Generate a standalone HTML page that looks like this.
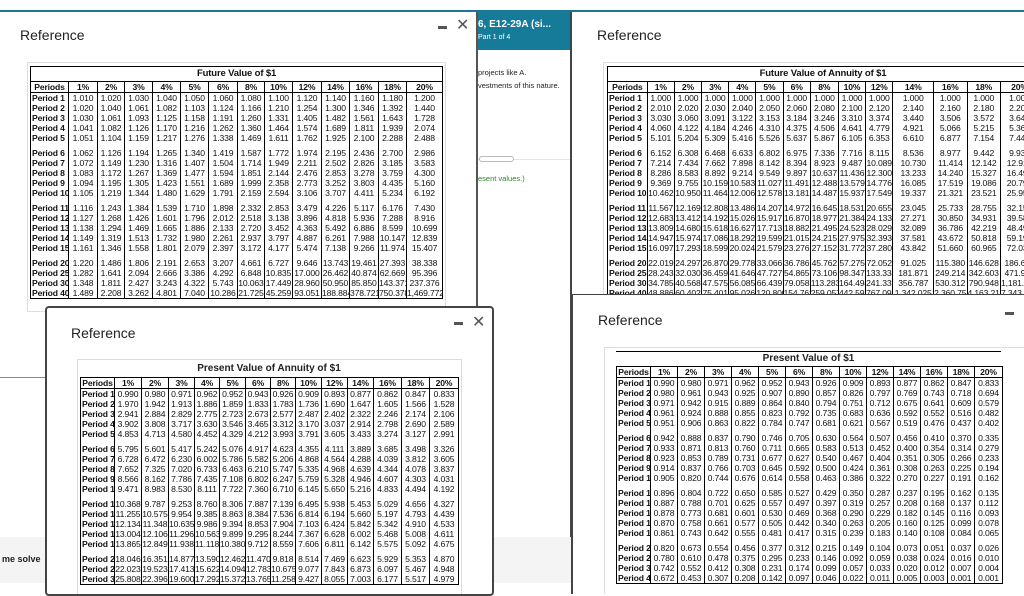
<!DOCTYPE html>
<html><head><meta charset="utf-8"><style>
*{margin:0;padding:0;box-sizing:border-box}
body{width:1024px;height:583px;overflow:hidden;position:relative;background:#fff;font-family:"Liberation Sans",sans-serif;color:#222}
.abs{position:absolute}
.win{position:absolute;background:#fff;overflow:hidden}
.ttl{position:absolute;font-size:14px;color:#222}
.frame{position:absolute;border:1px solid #ddd;background:#fff}
table.t{position:absolute;border-collapse:collapse;table-layout:fixed;font-family:"Liberation Sans Narrow","Liberation Sans",sans-serif;font-size:8.6px;letter-spacing:-0.15px;color:#111;border:1px solid #000}
table.t td,table.t th{height:10px;line-height:10px;padding:0;text-align:center;border-left:1px solid #000;white-space:nowrap;overflow:hidden;font-weight:normal}
table.t th{font-weight:bold;text-align:left;padding-left:1px}
table.t tr.h td,table.t tr.h th{font-weight:bold;text-align:center;border-bottom:1px solid #000;height:11px}
table.t tr.g td,table.t tr.g th{padding-top:5px;height:15px}
table.t tr.ti td{font-weight:bold;border-bottom:1px solid #000;height:15px;font-size:9.5px}
.ptitle{position:absolute;font-family:"Liberation Sans Narrow","Liberation Sans",sans-serif;font-weight:bold;font-size:10px;text-align:center}
.min{position:absolute;width:9px;height:3px;background:#555}
.x{position:absolute;font-size:16px;color:#555;line-height:16px}
</style></head><body>

<div class="abs" style="left:0;top:10px;width:1024px;height:2px;background:#1a7896"></div>

<!-- Window 1 -->
<div class="win" style="left:0;top:12px;width:478px;height:366px;border-right:2px solid #555;border-bottom:1px solid #888;z-index:1">
<div class="ttl" style="left:20px;top:15px">Reference</div>
<div class="min" style="left:438px;top:14px"></div>
<div class="x" style="left:456px;top:6px">✕</div>
<div class="frame" style="left:27px;top:50px;width:419px;height:250px"></div>
<table class="t" style="left:30px;top:54px;width:412px">
<colgroup><col style="width:38px"><col style="width:29px"><col style="width:27px"><col style="width:28px"><col style="width:28px"><col style="width:28px"><col style="width:29px"><col style="width:27px"><col style="width:28px"><col style="width:29px"><col style="width:28px"><col style="width:29px"><col style="width:28px"><col style="width:36px"></colgroup>
<tr class="ti"><td colspan="14">Future Value of $1</td></tr>
<tr class="h"><td>Periods</td><td>1%</td><td>2%</td><td>3%</td><td>4%</td><td>5%</td><td>6%</td><td>8%</td><td>10%</td><td>12%</td><td>14%</td><td>16%</td><td>18%</td><td>20%</td></tr>
<tr><th>Period 1</th><td>1.010</td><td>1.020</td><td>1.030</td><td>1.040</td><td>1.050</td><td>1.060</td><td>1.080</td><td>1.100</td><td>1.120</td><td>1.140</td><td>1.160</td><td>1.180</td><td>1.200</td></tr>
<tr><th>Period 2</th><td>1.020</td><td>1.040</td><td>1.061</td><td>1.082</td><td>1.103</td><td>1.124</td><td>1.166</td><td>1.210</td><td>1.254</td><td>1.300</td><td>1.346</td><td>1.392</td><td>1.440</td></tr>
<tr><th>Period 3</th><td>1.030</td><td>1.061</td><td>1.093</td><td>1.125</td><td>1.158</td><td>1.191</td><td>1.260</td><td>1.331</td><td>1.405</td><td>1.482</td><td>1.561</td><td>1.643</td><td>1.728</td></tr>
<tr><th>Period 4</th><td>1.041</td><td>1.082</td><td>1.126</td><td>1.170</td><td>1.216</td><td>1.262</td><td>1.360</td><td>1.464</td><td>1.574</td><td>1.689</td><td>1.811</td><td>1.939</td><td>2.074</td></tr>
<tr><th>Period 5</th><td>1.051</td><td>1.104</td><td>1.159</td><td>1.217</td><td>1.276</td><td>1.338</td><td>1.469</td><td>1.611</td><td>1.762</td><td>1.925</td><td>2.100</td><td>2.288</td><td>2.488</td></tr>
<tr class="g"><th>Period 6</th><td>1.062</td><td>1.126</td><td>1.194</td><td>1.265</td><td>1.340</td><td>1.419</td><td>1.587</td><td>1.772</td><td>1.974</td><td>2.195</td><td>2.436</td><td>2.700</td><td>2.986</td></tr>
<tr><th>Period 7</th><td>1.072</td><td>1.149</td><td>1.230</td><td>1.316</td><td>1.407</td><td>1.504</td><td>1.714</td><td>1.949</td><td>2.211</td><td>2.502</td><td>2.826</td><td>3.185</td><td>3.583</td></tr>
<tr><th>Period 8</th><td>1.083</td><td>1.172</td><td>1.267</td><td>1.369</td><td>1.477</td><td>1.594</td><td>1.851</td><td>2.144</td><td>2.476</td><td>2.853</td><td>3.278</td><td>3.759</td><td>4.300</td></tr>
<tr><th>Period 9</th><td>1.094</td><td>1.195</td><td>1.305</td><td>1.423</td><td>1.551</td><td>1.689</td><td>1.999</td><td>2.358</td><td>2.773</td><td>3.252</td><td>3.803</td><td>4.435</td><td>5.160</td></tr>
<tr><th>Period 10</th><td>1.105</td><td>1.219</td><td>1.344</td><td>1.480</td><td>1.629</td><td>1.791</td><td>2.159</td><td>2.594</td><td>3.106</td><td>3.707</td><td>4.411</td><td>5.234</td><td>6.192</td></tr>
<tr class="g"><th>Period 11</th><td>1.116</td><td>1.243</td><td>1.384</td><td>1.539</td><td>1.710</td><td>1.898</td><td>2.332</td><td>2.853</td><td>3.479</td><td>4.226</td><td>5.117</td><td>6.176</td><td>7.430</td></tr>
<tr><th>Period 12</th><td>1.127</td><td>1.268</td><td>1.426</td><td>1.601</td><td>1.796</td><td>2.012</td><td>2.518</td><td>3.138</td><td>3.896</td><td>4.818</td><td>5.936</td><td>7.288</td><td>8.916</td></tr>
<tr><th>Period 13</th><td>1.138</td><td>1.294</td><td>1.469</td><td>1.665</td><td>1.886</td><td>2.133</td><td>2.720</td><td>3.452</td><td>4.363</td><td>5.492</td><td>6.886</td><td>8.599</td><td>10.699</td></tr>
<tr><th>Period 14</th><td>1.149</td><td>1.319</td><td>1.513</td><td>1.732</td><td>1.980</td><td>2.261</td><td>2.937</td><td>3.797</td><td>4.887</td><td>6.261</td><td>7.988</td><td>10.147</td><td>12.839</td></tr>
<tr><th>Period 15</th><td>1.161</td><td>1.346</td><td>1.558</td><td>1.801</td><td>2.079</td><td>2.397</td><td>3.172</td><td>4.177</td><td>5.474</td><td>7.138</td><td>9.266</td><td>11.974</td><td>15.407</td></tr>
<tr class="g"><th>Period 20</th><td>1.220</td><td>1.486</td><td>1.806</td><td>2.191</td><td>2.653</td><td>3.207</td><td>4.661</td><td>6.727</td><td>9.646</td><td>13.743</td><td>19.461</td><td>27.393</td><td>38.338</td></tr>
<tr><th>Period 25</th><td>1.282</td><td>1.641</td><td>2.094</td><td>2.666</td><td>3.386</td><td>4.292</td><td>6.848</td><td>10.835</td><td>17.000</td><td>26.462</td><td>40.874</td><td>62.669</td><td>95.396</td></tr>
<tr><th>Period 30</th><td>1.348</td><td>1.811</td><td>2.427</td><td>3.243</td><td>4.322</td><td>5.743</td><td>10.063</td><td>17.449</td><td>28.960</td><td>50.950</td><td>85.850</td><td>143.371</td><td>237.376</td></tr>
<tr><th>Period 40</th><td>1.489</td><td>2.208</td><td>3.262</td><td>4.801</td><td>7.040</td><td>10.286</td><td>21.725</td><td>45.259</td><td>93.051</td><td>188.884</td><td>378.721</td><td>750.378</td><td>1,469.772</td></tr>
</table>
</div>

<!-- middle panel -->
<div class="win" style="left:478px;top:12px;width:94px;height:571px;border-right:2px solid #444;z-index:2">
<div class="abs" style="left:0;top:0;width:94px;height:38px;background:#167a99;color:#fff">
<div class="abs" style="left:0;top:7px;font-size:10px;font-weight:bold;white-space:nowrap">6, E12-29A (si...</div>
<div class="abs" style="left:0;top:22px;font-size:7px;white-space:nowrap">Part 1 of 4</div>
</div>
<div class="abs" style="left:0;top:56px;font-size:7.5px;white-space:nowrap">projects like A.</div>
<div class="abs" style="left:0;top:69px;font-size:7.5px;white-space:nowrap">vestments of this nature.</div>
<div class="abs" style="left:0;top:147px;width:94px;height:1px;background:#e4e4e4"></div>
<div class="abs" style="left:1px;top:144px;width:35px;height:6px;border:1px solid #bbb;border-radius:3px;background:#fff"></div>
<div class="abs" style="left:0;top:162px;font-size:7.5px;color:#2a8a2a;white-space:nowrap">esent values.)</div>
</div>

<!-- Window 3 -->
<div class="win" style="left:572px;top:12px;width:452px;height:282px;z-index:2">
<div class="ttl" style="left:25px;top:15px">Reference</div>
<div class="frame" style="left:31px;top:50px;width:430px;height:240px"></div>
<table class="t" style="left:35px;top:54px;width:432px">
<colgroup><col style="width:38px"><col style="width:26px"><col style="width:26px"><col style="width:26px"><col style="width:26px"><col style="width:26px"><col style="width:26px"><col style="width:27px"><col style="width:26px"><col style="width:26px"><col style="width:39px"><col style="width:32px"><col style="width:32px"><col style="width:36px"></colgroup>
<tr class="ti"><td colspan="14">Future Value of Annuity of $1</td></tr>
<tr class="h"><td>Periods</td><td>1%</td><td>2%</td><td>3%</td><td>4%</td><td>5%</td><td>6%</td><td>8%</td><td>10%</td><td>12%</td><td>14%</td><td>16%</td><td>18%</td><td>20%</td></tr>
<tr><th>Period 1</th><td>1.000</td><td>1.000</td><td>1.000</td><td>1.000</td><td>1.000</td><td>1.000</td><td>1.000</td><td>1.000</td><td>1.000</td><td>1.000</td><td>1.000</td><td>1.000</td><td>1.000</td></tr>
<tr><th>Period 2</th><td>2.010</td><td>2.020</td><td>2.030</td><td>2.040</td><td>2.050</td><td>2.060</td><td>2.080</td><td>2.100</td><td>2.120</td><td>2.140</td><td>2.160</td><td>2.180</td><td>2.200</td></tr>
<tr><th>Period 3</th><td>3.030</td><td>3.060</td><td>3.091</td><td>3.122</td><td>3.153</td><td>3.184</td><td>3.246</td><td>3.310</td><td>3.374</td><td>3.440</td><td>3.506</td><td>3.572</td><td>3.640</td></tr>
<tr><th>Period 4</th><td>4.060</td><td>4.122</td><td>4.184</td><td>4.246</td><td>4.310</td><td>4.375</td><td>4.506</td><td>4.641</td><td>4.779</td><td>4.921</td><td>5.066</td><td>5.215</td><td>5.368</td></tr>
<tr><th>Period 5</th><td>5.101</td><td>5.204</td><td>5.309</td><td>5.416</td><td>5.526</td><td>5.637</td><td>5.867</td><td>6.105</td><td>6.353</td><td>6.610</td><td>6.877</td><td>7.154</td><td>7.442</td></tr>
<tr class="g"><th>Period 6</th><td>6.152</td><td>6.308</td><td>6.468</td><td>6.633</td><td>6.802</td><td>6.975</td><td>7.336</td><td>7.716</td><td>8.115</td><td>8.536</td><td>8.977</td><td>9.442</td><td>9.930</td></tr>
<tr><th>Period 7</th><td>7.214</td><td>7.434</td><td>7.662</td><td>7.898</td><td>8.142</td><td>8.394</td><td>8.923</td><td>9.487</td><td>10.089</td><td>10.730</td><td>11.414</td><td>12.142</td><td>12.916</td></tr>
<tr><th>Period 8</th><td>8.286</td><td>8.583</td><td>8.892</td><td>9.214</td><td>9.549</td><td>9.897</td><td>10.637</td><td>11.436</td><td>12.300</td><td>13.233</td><td>14.240</td><td>15.327</td><td>16.499</td></tr>
<tr><th>Period 9</th><td>9.369</td><td>9.755</td><td>10.159</td><td>10.583</td><td>11.027</td><td>11.491</td><td>12.488</td><td>13.579</td><td>14.776</td><td>16.085</td><td>17.519</td><td>19.086</td><td>20.799</td></tr>
<tr><th>Period 10</th><td>10.462</td><td>10.950</td><td>11.464</td><td>12.006</td><td>12.578</td><td>13.181</td><td>14.487</td><td>15.937</td><td>17.549</td><td>19.337</td><td>21.321</td><td>23.521</td><td>25.959</td></tr>
<tr class="g"><th>Period 11</th><td>11.567</td><td>12.169</td><td>12.808</td><td>13.486</td><td>14.207</td><td>14.972</td><td>16.645</td><td>18.531</td><td>20.655</td><td>23.045</td><td>25.733</td><td>28.755</td><td>32.150</td></tr>
<tr><th>Period 12</th><td>12.683</td><td>13.412</td><td>14.192</td><td>15.026</td><td>15.917</td><td>16.870</td><td>18.977</td><td>21.384</td><td>24.133</td><td>27.271</td><td>30.850</td><td>34.931</td><td>39.581</td></tr>
<tr><th>Period 13</th><td>13.809</td><td>14.680</td><td>15.618</td><td>16.627</td><td>17.713</td><td>18.882</td><td>21.495</td><td>24.523</td><td>28.029</td><td>32.089</td><td>36.786</td><td>42.219</td><td>48.497</td></tr>
<tr><th>Period 14</th><td>14.947</td><td>15.974</td><td>17.086</td><td>18.292</td><td>19.599</td><td>21.015</td><td>24.215</td><td>27.975</td><td>32.393</td><td>37.581</td><td>43.672</td><td>50.818</td><td>59.196</td></tr>
<tr><th>Period 15</th><td>16.097</td><td>17.293</td><td>18.599</td><td>20.024</td><td>21.579</td><td>23.276</td><td>27.152</td><td>31.772</td><td>37.280</td><td>43.842</td><td>51.660</td><td>60.965</td><td>72.035</td></tr>
<tr class="g"><th>Period 20</th><td>22.019</td><td>24.297</td><td>26.870</td><td>29.778</td><td>33.066</td><td>36.786</td><td>45.762</td><td>57.275</td><td>72.052</td><td>91.025</td><td>115.380</td><td>146.628</td><td>186.688</td></tr>
<tr><th>Period 25</th><td>28.243</td><td>32.030</td><td>36.459</td><td>41.646</td><td>47.727</td><td>54.865</td><td>73.106</td><td>98.347</td><td>133.334</td><td>181.871</td><td>249.214</td><td>342.603</td><td>471.981</td></tr>
<tr><th>Period 30</th><td>34.785</td><td>40.568</td><td>47.575</td><td>56.085</td><td>66.439</td><td>79.058</td><td>113.283</td><td>164.494</td><td>241.333</td><td>356.787</td><td>530.312</td><td>790.948</td><td>1,181.882</td></tr>
<tr><th>Period 40</th><td>48.886</td><td>60.402</td><td>75.401</td><td>95.026</td><td>120.800</td><td>154.762</td><td>259.057</td><td>442.593</td><td>767.091</td><td>1,342.025</td><td>2,360.757</td><td>4,163.213</td><td>7,343.858</td></tr>
</table>
</div>

<!-- Window 4 -->
<div class="win" style="left:45px;top:306px;width:449px;height:290px;border:2px solid #444;border-radius:4px;z-index:3">
<div class="ttl" style="left:24px;top:17px">Reference</div>
<div class="min" style="left:407px;top:14px"></div>
<div class="x" style="left:425px;top:7px">✕</div>
<div class="frame" style="left:30px;top:51px;width:385px;height:240px"></div>
<div class="ptitle" style="left:33px;top:55px;width:378px">Present Value of Annuity of $1</div>
<table class="t" style="left:33px;top:69px;width:378px">
<colgroup><col style="width:34px"><col style="width:27px"><col style="width:27px"><col style="width:26px"><col style="width:25px"><col style="width:26px"><col style="width:25px"><col style="width:25px"><col style="width:26px"><col style="width:26px"><col style="width:26px"><col style="width:28px"><col style="width:28px"><col style="width:29px"></colgroup>
<tr class="h"><td>Periods</td><td>1%</td><td>2%</td><td>3%</td><td>4%</td><td>5%</td><td>6%</td><td>8%</td><td>10%</td><td>12%</td><td>14%</td><td>16%</td><td>18%</td><td>20%</td></tr>
<tr><th>Period 1</th><td>0.990</td><td>0.980</td><td>0.971</td><td>0.962</td><td>0.952</td><td>0.943</td><td>0.926</td><td>0.909</td><td>0.893</td><td>0.877</td><td>0.862</td><td>0.847</td><td>0.833</td></tr>
<tr><th>Period 2</th><td>1.970</td><td>1.942</td><td>1.913</td><td>1.886</td><td>1.859</td><td>1.833</td><td>1.783</td><td>1.736</td><td>1.690</td><td>1.647</td><td>1.605</td><td>1.566</td><td>1.528</td></tr>
<tr><th>Period 3</th><td>2.941</td><td>2.884</td><td>2.829</td><td>2.775</td><td>2.723</td><td>2.673</td><td>2.577</td><td>2.487</td><td>2.402</td><td>2.322</td><td>2.246</td><td>2.174</td><td>2.106</td></tr>
<tr><th>Period 4</th><td>3.902</td><td>3.808</td><td>3.717</td><td>3.630</td><td>3.546</td><td>3.465</td><td>3.312</td><td>3.170</td><td>3.037</td><td>2.914</td><td>2.798</td><td>2.690</td><td>2.589</td></tr>
<tr><th>Period 5</th><td>4.853</td><td>4.713</td><td>4.580</td><td>4.452</td><td>4.329</td><td>4.212</td><td>3.993</td><td>3.791</td><td>3.605</td><td>3.433</td><td>3.274</td><td>3.127</td><td>2.991</td></tr>
<tr class="g"><th>Period 6</th><td>5.795</td><td>5.601</td><td>5.417</td><td>5.242</td><td>5.076</td><td>4.917</td><td>4.623</td><td>4.355</td><td>4.111</td><td>3.889</td><td>3.685</td><td>3.498</td><td>3.326</td></tr>
<tr><th>Period 7</th><td>6.728</td><td>6.472</td><td>6.230</td><td>6.002</td><td>5.786</td><td>5.582</td><td>5.206</td><td>4.868</td><td>4.564</td><td>4.288</td><td>4.039</td><td>3.812</td><td>3.605</td></tr>
<tr><th>Period 8</th><td>7.652</td><td>7.325</td><td>7.020</td><td>6.733</td><td>6.463</td><td>6.210</td><td>5.747</td><td>5.335</td><td>4.968</td><td>4.639</td><td>4.344</td><td>4.078</td><td>3.837</td></tr>
<tr><th>Period 9</th><td>8.566</td><td>8.162</td><td>7.786</td><td>7.435</td><td>7.108</td><td>6.802</td><td>6.247</td><td>5.759</td><td>5.328</td><td>4.946</td><td>4.607</td><td>4.303</td><td>4.031</td></tr>
<tr><th>Period 10</th><td>9.471</td><td>8.983</td><td>8.530</td><td>8.111</td><td>7.722</td><td>7.360</td><td>6.710</td><td>6.145</td><td>5.650</td><td>5.216</td><td>4.833</td><td>4.494</td><td>4.192</td></tr>
<tr class="g"><th>Period 11</th><td>10.368</td><td>9.787</td><td>9.253</td><td>8.760</td><td>8.306</td><td>7.887</td><td>7.139</td><td>6.495</td><td>5.938</td><td>5.453</td><td>5.029</td><td>4.656</td><td>4.327</td></tr>
<tr><th>Period 12</th><td>11.255</td><td>10.575</td><td>9.954</td><td>9.385</td><td>8.863</td><td>8.384</td><td>7.536</td><td>6.814</td><td>6.194</td><td>5.660</td><td>5.197</td><td>4.793</td><td>4.439</td></tr>
<tr><th>Period 13</th><td>12.134</td><td>11.348</td><td>10.635</td><td>9.986</td><td>9.394</td><td>8.853</td><td>7.904</td><td>7.103</td><td>6.424</td><td>5.842</td><td>5.342</td><td>4.910</td><td>4.533</td></tr>
<tr><th>Period 14</th><td>13.004</td><td>12.106</td><td>11.296</td><td>10.563</td><td>9.899</td><td>9.295</td><td>8.244</td><td>7.367</td><td>6.628</td><td>6.002</td><td>5.468</td><td>5.008</td><td>4.611</td></tr>
<tr><th>Period 15</th><td>13.865</td><td>12.849</td><td>11.938</td><td>11.118</td><td>10.380</td><td>9.712</td><td>8.559</td><td>7.606</td><td>6.811</td><td>6.142</td><td>5.575</td><td>5.092</td><td>4.675</td></tr>
<tr class="g"><th>Period 20</th><td>18.046</td><td>16.351</td><td>14.877</td><td>13.590</td><td>12.462</td><td>11.470</td><td>9.818</td><td>8.514</td><td>7.469</td><td>6.623</td><td>5.929</td><td>5.353</td><td>4.870</td></tr>
<tr><th>Period 25</th><td>22.023</td><td>19.523</td><td>17.413</td><td>15.622</td><td>14.094</td><td>12.783</td><td>10.675</td><td>9.077</td><td>7.843</td><td>6.873</td><td>6.097</td><td>5.467</td><td>4.948</td></tr>
<tr><th>Period 30</th><td>25.808</td><td>22.396</td><td>19.600</td><td>17.292</td><td>15.372</td><td>13.765</td><td>11.258</td><td>9.427</td><td>8.055</td><td>7.003</td><td>6.177</td><td>5.517</td><td>4.979</td></tr>
</table>
</div>

<!-- bottom-left grey -->
<div class="abs" style="left:0;top:537px;width:45px;height:46px;background:#f4f4f4"></div>
<div class="abs" style="left:2px;top:554px;font-size:9px;font-weight:bold;z-index:4;white-space:nowrap">me solve</div>
<div class="abs" style="left:494px;top:537px;width:78px;height:46px;background:#f4f4f4;z-index:2"></div>

<!-- Window 5 -->
<div class="win" style="left:571px;top:294px;width:460px;height:300px;border-left:2px solid #444;border-top:1px solid #444;z-index:3">
<div class="ttl" style="left:25px;top:17px">Reference</div>
<div class="min" style="left:432px;top:17px"></div>
<div class="frame" style="left:31px;top:52px;width:430px;height:250px"></div>
<div class="abs" style="left:43px;top:56px;width:385px;height:1px;background:#000"></div>
<div class="ptitle" style="left:43px;top:58px;width:385px">Present Value of $1</div>
<table class="t" style="left:43px;top:71px;width:386px">
<colgroup><col style="width:34px"><col style="width:27px"><col style="width:27px"><col style="width:27px"><col style="width:27px"><col style="width:27px"><col style="width:27px"><col style="width:27px"><col style="width:27px"><col style="width:27px"><col style="width:27px"><col style="width:27px"><col style="width:27px"><col style="width:28px"></colgroup>
<tr class="h"><td>Periods</td><td>1%</td><td>2%</td><td>3%</td><td>4%</td><td>5%</td><td>6%</td><td>8%</td><td>10%</td><td>12%</td><td>14%</td><td>16%</td><td>18%</td><td>20%</td></tr>
<tr><th>Period 1</th><td>0.990</td><td>0.980</td><td>0.971</td><td>0.962</td><td>0.952</td><td>0.943</td><td>0.926</td><td>0.909</td><td>0.893</td><td>0.877</td><td>0.862</td><td>0.847</td><td>0.833</td></tr>
<tr><th>Period 2</th><td>0.980</td><td>0.961</td><td>0.943</td><td>0.925</td><td>0.907</td><td>0.890</td><td>0.857</td><td>0.826</td><td>0.797</td><td>0.769</td><td>0.743</td><td>0.718</td><td>0.694</td></tr>
<tr><th>Period 3</th><td>0.971</td><td>0.942</td><td>0.915</td><td>0.889</td><td>0.864</td><td>0.840</td><td>0.794</td><td>0.751</td><td>0.712</td><td>0.675</td><td>0.641</td><td>0.609</td><td>0.579</td></tr>
<tr><th>Period 4</th><td>0.961</td><td>0.924</td><td>0.888</td><td>0.855</td><td>0.823</td><td>0.792</td><td>0.735</td><td>0.683</td><td>0.636</td><td>0.592</td><td>0.552</td><td>0.516</td><td>0.482</td></tr>
<tr><th>Period 5</th><td>0.951</td><td>0.906</td><td>0.863</td><td>0.822</td><td>0.784</td><td>0.747</td><td>0.681</td><td>0.621</td><td>0.567</td><td>0.519</td><td>0.476</td><td>0.437</td><td>0.402</td></tr>
<tr class="g"><th>Period 6</th><td>0.942</td><td>0.888</td><td>0.837</td><td>0.790</td><td>0.746</td><td>0.705</td><td>0.630</td><td>0.564</td><td>0.507</td><td>0.456</td><td>0.410</td><td>0.370</td><td>0.335</td></tr>
<tr><th>Period 7</th><td>0.933</td><td>0.871</td><td>0.813</td><td>0.760</td><td>0.711</td><td>0.665</td><td>0.583</td><td>0.513</td><td>0.452</td><td>0.400</td><td>0.354</td><td>0.314</td><td>0.279</td></tr>
<tr><th>Period 8</th><td>0.923</td><td>0.853</td><td>0.789</td><td>0.731</td><td>0.677</td><td>0.627</td><td>0.540</td><td>0.467</td><td>0.404</td><td>0.351</td><td>0.305</td><td>0.266</td><td>0.233</td></tr>
<tr><th>Period 9</th><td>0.914</td><td>0.837</td><td>0.766</td><td>0.703</td><td>0.645</td><td>0.592</td><td>0.500</td><td>0.424</td><td>0.361</td><td>0.308</td><td>0.263</td><td>0.225</td><td>0.194</td></tr>
<tr><th>Period 10</th><td>0.905</td><td>0.820</td><td>0.744</td><td>0.676</td><td>0.614</td><td>0.558</td><td>0.463</td><td>0.386</td><td>0.322</td><td>0.270</td><td>0.227</td><td>0.191</td><td>0.162</td></tr>
<tr class="g"><th>Period 11</th><td>0.896</td><td>0.804</td><td>0.722</td><td>0.650</td><td>0.585</td><td>0.527</td><td>0.429</td><td>0.350</td><td>0.287</td><td>0.237</td><td>0.195</td><td>0.162</td><td>0.135</td></tr>
<tr><th>Period 12</th><td>0.887</td><td>0.788</td><td>0.701</td><td>0.625</td><td>0.557</td><td>0.497</td><td>0.397</td><td>0.319</td><td>0.257</td><td>0.208</td><td>0.168</td><td>0.137</td><td>0.112</td></tr>
<tr><th>Period 13</th><td>0.878</td><td>0.773</td><td>0.681</td><td>0.601</td><td>0.530</td><td>0.469</td><td>0.368</td><td>0.290</td><td>0.229</td><td>0.182</td><td>0.145</td><td>0.116</td><td>0.093</td></tr>
<tr><th>Period 14</th><td>0.870</td><td>0.758</td><td>0.661</td><td>0.577</td><td>0.505</td><td>0.442</td><td>0.340</td><td>0.263</td><td>0.205</td><td>0.160</td><td>0.125</td><td>0.099</td><td>0.078</td></tr>
<tr><th>Period 15</th><td>0.861</td><td>0.743</td><td>0.642</td><td>0.555</td><td>0.481</td><td>0.417</td><td>0.315</td><td>0.239</td><td>0.183</td><td>0.140</td><td>0.108</td><td>0.084</td><td>0.065</td></tr>
<tr class="g"><th>Period 20</th><td>0.820</td><td>0.673</td><td>0.554</td><td>0.456</td><td>0.377</td><td>0.312</td><td>0.215</td><td>0.149</td><td>0.104</td><td>0.073</td><td>0.051</td><td>0.037</td><td>0.026</td></tr>
<tr><th>Period 25</th><td>0.780</td><td>0.610</td><td>0.478</td><td>0.375</td><td>0.295</td><td>0.233</td><td>0.146</td><td>0.092</td><td>0.059</td><td>0.038</td><td>0.024</td><td>0.016</td><td>0.010</td></tr>
<tr><th>Period 30</th><td>0.742</td><td>0.552</td><td>0.412</td><td>0.308</td><td>0.231</td><td>0.174</td><td>0.099</td><td>0.057</td><td>0.033</td><td>0.020</td><td>0.012</td><td>0.007</td><td>0.004</td></tr>
<tr><th>Period 40</th><td>0.672</td><td>0.453</td><td>0.307</td><td>0.208</td><td>0.142</td><td>0.097</td><td>0.046</td><td>0.022</td><td>0.011</td><td>0.005</td><td>0.003</td><td>0.001</td><td>0.001</td></tr>
</table>
</div>
</body></html>
